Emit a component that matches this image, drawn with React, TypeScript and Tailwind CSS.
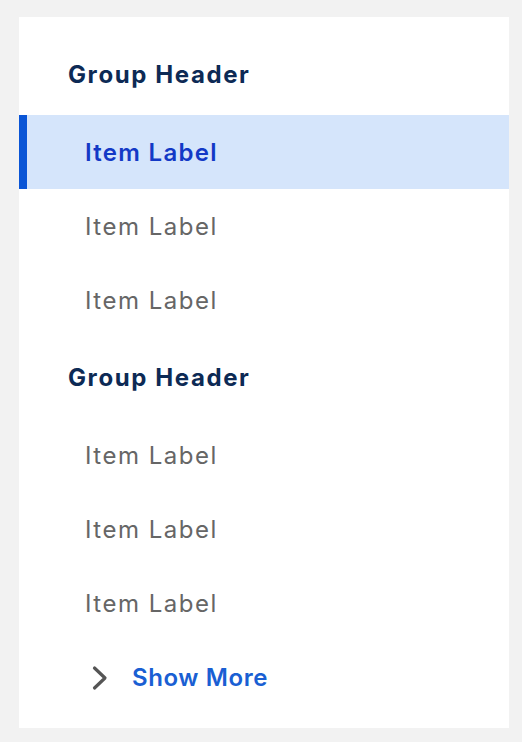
const groups = [
  { header: "Group Header", items: ["Item Label", "Item Label", "Item Label"] },
  { header: "Group Header", items: ["Item Label", "Item Label", "Item Label"] },
];

export default function App() {
  return (
    <div className="min-h-[742px] bg-[#f2f2f2] pl-[19px] pr-[13px] pt-[17px] pb-[14px] [font-family:Inter,'Noto_Sans',sans-serif]">
      <nav className="bg-white pt-[17px] pb-[14px]">
        {groups.map((group, g) => (
          <div key={g}>
            <div className="flex h-[81px] items-center pl-[49px] text-[24px] font-bold tracking-[1.6px] text-[#0d2a55]">
              {group.header}
            </div>
            {group.items.map((label, i) => {
              const active = g === 0 && i === 0;
              return active ? (
                <div
                  key={i}
                  className="flex h-[74px] items-center border-l-[8px] border-[#0a55d6] bg-[#d5e5fb] pl-[58px] pt-[2px] text-[24px] font-semibold tracking-[1.3px] text-[#1339c6]"
                >
                  {label}
                </div>
              ) : (
                <div
                  key={i}
                  className="flex h-[74px] items-center pl-[66px] pt-[2px] text-[24px] tracking-[1.5px] text-[#666666]"
                >
                  {label}
                </div>
              );
            })}
          </div>
        ))}
        <button className="flex h-[74px] items-center gap-[24px] pl-[71px] pt-[2px]">
          <svg width="18" height="26" viewBox="0 0 18 26" fill="none">
            <path d="M4.5 3l10.5 10-10.5 10" stroke="#555555" strokeWidth="3.2" strokeLinecap="round" strokeLinejoin="round" />
          </svg>
          <span className="text-[24px] font-semibold tracking-[0.6px] text-[#1a5fd3]">Show More</span>
        </button>
      </nav>
    </div>
  );
}
